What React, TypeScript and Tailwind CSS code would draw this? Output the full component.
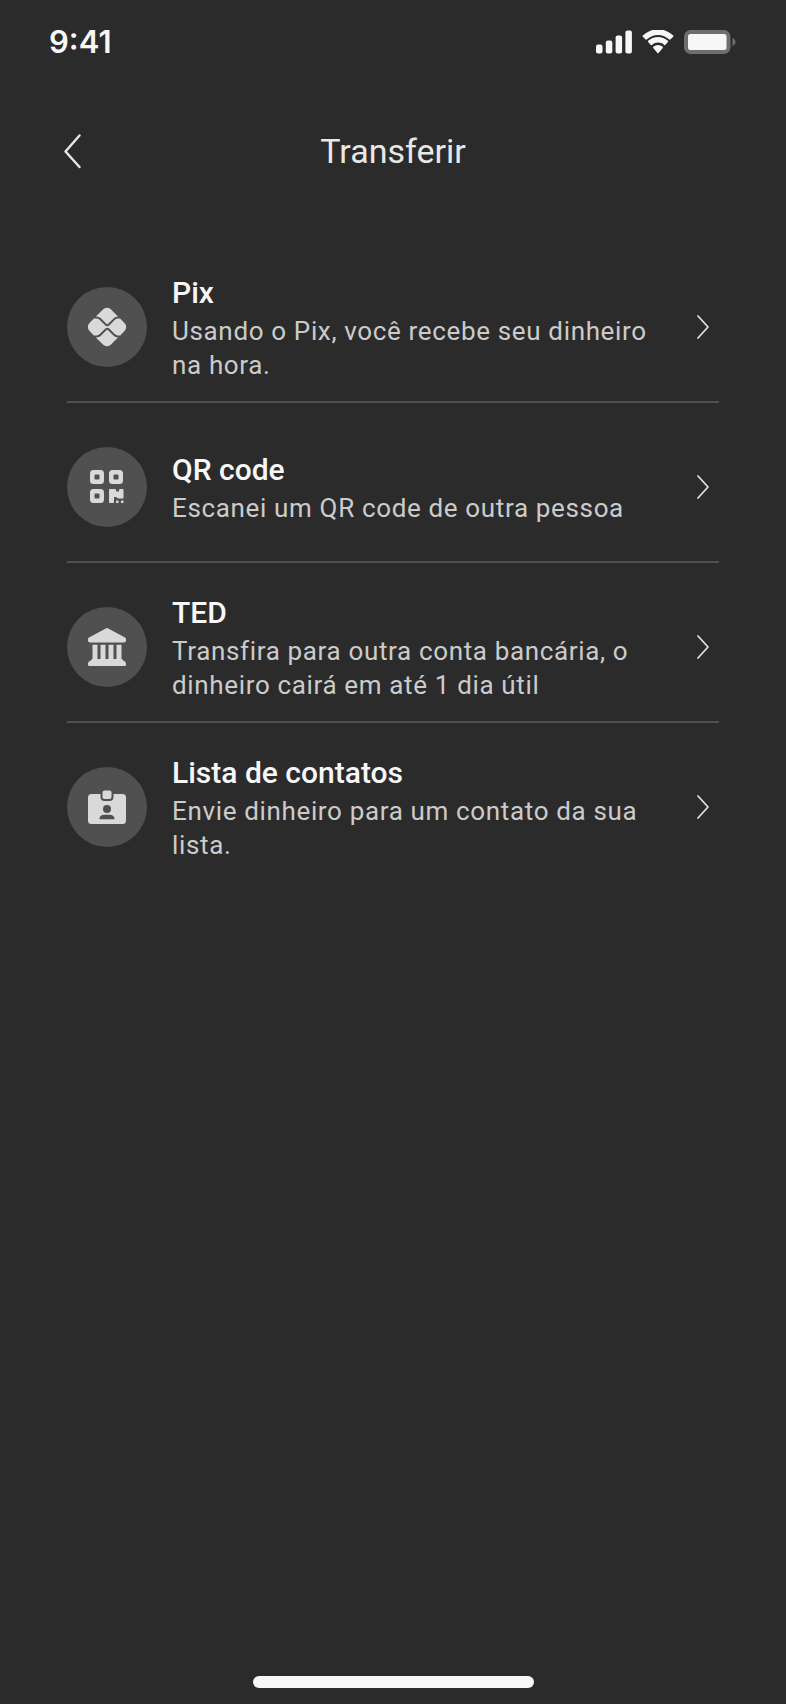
import type { ReactNode } from 'react';
import { MdPix } from 'react-icons/md';

type TransferOption = {
  id: string;
  title: string;
  description: string;
  icon: ReactNode;
};

function QrCodeIcon() {
  return (
    <svg viewBox="0 0 40 40" className="size-10" fill="currentColor" aria-hidden="true">
      <path
        fillRule="evenodd"
        d="M6.500 3h7a3.500 3.500 0 0 1 3.500 3.500v7a3.500 3.500 0 0 1-3.500 3.500h-7a3.500 3.500 0 0 1-3.500-3.500v-7a3.500 3.500 0 0 1 3.500-3.500zM8.500 7.500a1 1 0 0 0-1 1v3a1 1 0 0 0 1 1h3a1 1 0 0 0 1-1v-3a1 1 0 0 0-1-1z"
      />
      <path
        fillRule="evenodd"
        d="M25.500 3h7a3.500 3.500 0 0 1 3.500 3.500v7a3.500 3.500 0 0 1-3.500 3.500h-7a3.500 3.500 0 0 1-3.500-3.500v-7a3.500 3.500 0 0 1 3.500-3.500zM27.500 7.500a1 1 0 0 0-1 1v3a1 1 0 0 0 1 1h3a1 1 0 0 0 1-1v-3a1 1 0 0 0-1-1z"
      />
      <path
        fillRule="evenodd"
        d="M6.500 22h7a3.500 3.500 0 0 1 3.500 3.500v7a3.500 3.500 0 0 1-3.500 3.500h-7a3.500 3.500 0 0 1-3.500-3.500v-7a3.500 3.500 0 0 1 3.500-3.500zM8.500 26.500a1 1 0 0 0-1 1v3a1 1 0 0 0 1 1h3a1 1 0 0 0 1-1v-3a1 1 0 0 0-1-1z"
      />
      <path d="M23 22h5.500l1 2.500h2.500V23a1 1 0 0 1 1-1h2.500a1 1 0 0 1 1 1v7.500a1 1 0 0 1-1 1H31l-2-1.500h-2v5a1 1 0 0 1-1 1h-3a1 1 0 0 1-1-1V23a1 1 0 0 1 1-1z" />
      <rect x="29" y="33.500" width="2.500" height="2.500" rx=".5" />
      <rect x="34" y="33.500" width="2.500" height="2.500" rx=".5" />
    </svg>
  );
}

function BankIcon() {
  return (
    <svg viewBox="0 0 40 40" className="size-10" fill="currentColor" aria-hidden="true">
      <path d="M18.800 1.400a2.500 2.500 0 0 1 2.400 0L38 10.500c.7.400 1 1 1 1.700v1.300c0 1.100-.8 1.900-1.900 1.900H2.900C1.800 15.400 1 14.600 1 13.500v-1.300c0-.7.300-1.300 1-1.700z" />
      <path d="M5.500 17.800h5v14.700h-5zM13.500 17.800h5v14.700h-5zM21.500 17.800h5v14.700h-5zM29.500 17.800h5v14.700h-5z" />
      <path d="M5.500 32h29a1.500 1.500 0 0 1 1.500 1.500c1.800.3 3 1.700 3 3.500v.5a1.500 1.500 0 0 1-1.500 1.500h-35A1.500 1.500 0 0 1 1 37.500V37c0-1.800 1.200-3.200 3-3.500A1.500 1.500 0 0 1 5.500 32z" />
    </svg>
  );
}

function ContactBadgeIcon() {
  return (
    <svg viewBox="0 0 40 40" className="size-10" fill="currentColor" aria-hidden="true">
      <rect x="1" y="7" width="38" height="30" rx="3.500" />
      <rect x="14.500" y="2.500" width="11" height="10.500" rx="3" stroke="#505050" strokeWidth="2" />
      <g fill="#505050">
        <circle cx="20" cy="22" r="4" />
        <path d="M12.500 32.300v-.8c0-2.300 2.300-3.800 5-3.800h5c2.700 0 5 1.500 5 3.800v.8z" />
      </g>
    </svg>
  );
}

const OPTIONS: TransferOption[] = [
  {
    id: 'pix',
    title: 'Pix',
    description: 'Usando o Pix, você recebe seu dinheiro na hora.',
    icon: <MdPix size={46} aria-hidden="true" />,
  },
  {
    id: 'qr-code',
    title: 'QR code',
    description: 'Escanei um QR code de outra pessoa',
    icon: <QrCodeIcon />,
  },
  {
    id: 'ted',
    title: 'TED',
    description: 'Transfira para outra conta bancária, o dinheiro cairá em até 1 dia útil',
    icon: <BankIcon />,
  },
  {
    id: 'contacts',
    title: 'Lista de contatos',
    description: 'Envie dinheiro para um contato da sua lista.',
    icon: <ContactBadgeIcon />,
  },
];

function StatusBar() {
  return (
    <div className="flex h-[84px] items-center justify-between px-[49px] text-[#f7f7f7]">
      <span className="font-[Inter,sans-serif] text-[31px] leading-10 font-semibold">9:41</span>
      <div className="flex items-center gap-2.5">
        <svg viewBox="0 0 36 24" className="h-6 w-9" fill="currentColor" aria-hidden="true">
          <rect x="0" y="14.500" width="6.500" height="9" rx="2" />
          <rect x="9.800" y="10.500" width="6.500" height="13" rx="2" />
          <rect x="19.600" y="5.500" width="6.500" height="18" rx="2" />
          <rect x="29.400" y=".5" width="6.500" height="23" rx="2" />
        </svg>
        <svg viewBox="0 0 32 24" className="h-6 w-8" fill="currentColor" aria-hidden="true">
          <path d="M16 5c4.300 0 8.300 1.700 11.300 4.600.3.300.7.300 1 0l2.900-2.900c.4-.4.4-.9 0-1.300a22 22 0 0 0-30.400 0c-.4.400-.4.900 0 1.300l2.900 2.900c.3.300.7.300 1 0C7.700 6.700 11.700 5 16 5z" />
          <path d="M16 12.500c2.300 0 4.500.8 6.200 2.400.3.300.7.300 1 0l2.700-2.800c.4-.4.4-.9 0-1.300a14.500 14.500 0 0 0-19.800 0c-.4.400-.4.900 0 1.300l2.700 2.800c.3.300.7.300 1 0a9.200 9.200 0 0 1 6.200-2.400z" />
          <path d="M20.700 18c.4-.4.400-.9 0-1.200a7.300 7.300 0 0 0-9.400 0c-.4.300-.4.800 0 1.200l4.100 4.900c.3.400.9.400 1.200 0z" />
        </svg>
        <svg viewBox="0 0 53 24" className="h-6 w-[53px]" aria-hidden="true">
          <rect x="0" y="0" width="46.500" height="24" rx="6.500" fill="#6e6e6e" />
          <rect x="4" y="4" width="38.500" height="16" rx="2.500" fill="currentColor" />
          <path d="M48.500 8c1.800.7 3 2.200 3 4s-1.200 3.300-3 4z" fill="#6e6e6e" />
        </svg>
      </div>
    </div>
  );
}

function NavBar() {
  return (
    <header className="grid h-[133px] grid-cols-[1fr_auto_1fr] items-center px-14 text-[#e8e8e8]">
      <button type="button" aria-label="Voltar" className="justify-self-start p-2">
        <svg viewBox="0 0 18 36" className="h-9 w-[18px]" fill="none" stroke="currentColor" strokeWidth="2.400" strokeLinecap="round" strokeLinejoin="round" aria-hidden="true">
          <path d="M15.500 2.500 1.500 18.500l14 15.500" />
        </svg>
      </button>
      <h1 className="text-[34px] leading-10 font-normal">Transferir</h1>
    </header>
  );
}

function OptionRow({ title, description, icon }: Omit<TransferOption, 'id'>) {
  return (
    <button type="button" className="flex min-h-[158px] w-full items-center gap-[25px] pt-2.5 text-left">
      <span className="flex size-20 shrink-0 items-center justify-center rounded-full bg-[#505050] text-[#d9d9d9]">
        {icon}
      </span>
      <span className="flex-1">
        <span className="block text-[30px] leading-[42px] font-medium text-[#f7f7f7]">{title}</span>
        <span className="block text-[26px] leading-[34px] tracking-wide text-[#cbcbcb]">{description}</span>
      </span>
      <svg viewBox="0 0 14 26" className="mr-[9px] ml-3 h-[26px] w-3.5 shrink-0" fill="none" stroke="#dedede" strokeWidth="1.800" strokeLinecap="round" strokeLinejoin="round" aria-hidden="true">
        <path d="M2 2l10 11L2 24" />
      </svg>
    </button>
  );
}

export default function App() {
  return (
    <div className="flex min-h-screen flex-col bg-[#2b2b2b] font-[Roboto,sans-serif]">
      <StatusBar />
      <NavBar />
      <main className="flex-1 px-[67px] pt-[26px]">
        <ul className="divide-y-2 divide-[#505050]">
          {OPTIONS.map(({ id, ...option }) => (
            <li key={id}>
              <OptionRow {...option} />
            </li>
          ))}
        </ul>
      </main>
      <div className="flex justify-center pb-4">
        <div className="h-3 w-[281px] rounded-full bg-[#f7f7f7]" />
      </div>
    </div>
  );
}
